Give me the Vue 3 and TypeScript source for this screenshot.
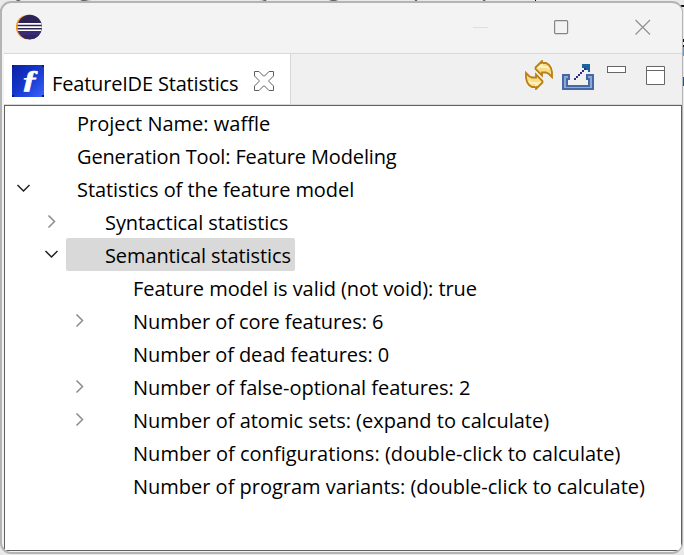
<script setup lang="ts">
interface Row {
  text: string
  level: number
  state?: 'open' | 'closed'
  selected?: boolean
  spacing: number
}

const rows: Row[] = [
  { text: 'Project Name: waffle', level: 0, spacing: 0 },
  { text: 'Generation Tool: Feature Modeling', level: 0, spacing: -0.14 },
  { text: 'Statistics of the feature model', level: 0, state: 'open', spacing: -0.07 },
  { text: 'Syntactical statistics', level: 1, state: 'closed', spacing: -0.08 },
  { text: 'Semantical statistics', level: 1, state: 'open', selected: true, spacing: -0.1 },
  { text: 'Feature model is valid (not void): true', level: 2, spacing: -0.06 },
  { text: 'Number of core features: 6', level: 2, state: 'closed', spacing: -0.07 },
  { text: 'Number of dead features: 0', level: 2, spacing: -0.07 },
  { text: 'Number of false-optional features: 2', level: 2, state: 'closed', spacing: -0.02 },
  { text: 'Number of atomic sets: (expand to calculate)', level: 2, state: 'closed', spacing: 0 },
  { text: 'Number of configurations: (double-click to calculate)', level: 2, spacing: 0.03 },
  { text: 'Number of program variants: (double-click to calculate)', level: 2, spacing: -0.01 },
]
</script>

<template>
  <div class="desktop">
    <svg class="behind" width="684" height="555" viewBox="0 0 684 555">
      <path d="M0 9h3v33H0z" fill="#a7a5cf" />
      <path d="M16 0l6 4M80 0q6 3 12 3M260 3q5 0 6-3M329 0l9 3M415 3l2-3M483 0l3 4" transform="translate(0 -1)" fill="none" stroke="#666" stroke-width="2" />
      <path d="M535 0h1v3h-1zM678 5h6v2h-6zM683 39h1v3h-1zM683 45h1v2h-1z" fill="#111" />
      <path d="M683 47h1v9h-1z" fill="#5b9bd5" />
      <path d="M683 77h1v9h-1z" fill="#294f91" />
    </svg>
    <div class="window">
      <header class="titlebar">
        <svg class="eclipse" width="28" height="28" viewBox="0 0 28 28">
          <defs>
            <clipPath id="disc"><circle cx="14.6" cy="14" r="12.2" /></clipPath>
          </defs>
          <circle cx="13.2" cy="14" r="12.3" fill="#f7941e" />
          <circle cx="14.8" cy="14" r="12.2" fill="#2c2255" />
          <g clip-path="url(#disc)">
            <path d="M2 17h26v10H2z" fill="#3a2b75" />
            <path d="M2 22h26v6H2z" fill="#2c2255" opacity=".55" />
            <path d="M2 10h26v1.8H2zM2 13.2h26v1.8H2zM2 16.4h26v1.6H2z" fill="#fff" />
          </g>
        </svg>
        <svg class="controls" width="180" height="20" viewBox="0 0 180 20" fill="none">
          <path d="M0 10.5h15" stroke="#dedede" />
          <rect x="81.6" y="3.6" width="13" height="13" rx="1" stroke="#858585" stroke-width="1.2" />
          <path d="M162.5 3l14.500 14.500M177 3l-14.500 14.500" stroke="#909090" stroke-width="1.2" />
        </svg>
      </header>
      <div class="tabs">
        <div class="tab">
          <svg class="logo" width="32" height="32" viewBox="0 0 32 32">
            <defs>
              <linearGradient id="blue" x1="0" y1="0" x2="1" y2="1">
                <stop offset="0" stop-color="#0a20a5" />
                <stop offset=".5" stop-color="#1638cc" />
                <stop offset="1" stop-color="#3a63ff" />
              </linearGradient>
            </defs>
            <rect width="32" height="32" fill="url(#blue)" />
            <path d="M0 0h2v2H0zM30 0h2v2h-2zM0 30h2v2H0zM30 30h2v2h-2z" fill="#071a66" />
            <text x="0" y="0" class="glyph" transform="translate(9.500 22.500) scale(1.3 1)">ƒ</text>
          </svg>
          <span class="caption">FeatureIDE Statistics</span>
          <svg class="close" width="20" height="20" viewBox="0 0 20 20">
            <path d="M.5.5h4.500l4.500 4.500h1L15 .5h4.500V5L15 9.500v1l4.500 4.500v4.500H15L10.500 15h-1L5 19.500H.5V15L5 10.500v-1L.5 5z" fill="#fff" stroke="#5f5f5f" />
          </svg>
        </div>
        <div class="tools">
          <svg class="sync" width="28" height="30" viewBox="0 0 28 30">
            <g id="arrow" stroke-width="1.8">
              <path d="M10.500 7.500L17 1v2h4l3 2 2 3 1 4v5l-3-3-3-1.500h-4v3L10.500 9z" fill="#f8dc86" stroke="#b98016" />
              <path d="M13 8l4-3v2h5l2 2" fill="none" stroke="#fff2c2" />
            </g>
            <use href="#arrow" transform="rotate(180 14 15)" />
          </svg>
          <svg class="export" width="32" height="27" viewBox="0 0 32 27" shape-rendering="crispEdges">
            <path d="M0 10h8v6H6v5h20v-5h-2v-6h8v16H0z" fill="#4668a7" />
            <path d="M2 12h4v2H4v9h24v-9h-2v-2h4v12H2z" fill="#8da9d6" />
            <path d="M20 0h8v8h-2V6h-2V4h-4z" fill="#17649b" />
            <path d="M12 14h2v2h-2zM14 12h2v2h-2zM16 10h2v2h-2zM18 8h2v2h-2zM20 6h2v2h-2zM22 4h2v2h-2z" fill="#2d2b86" />
          </svg>
          <svg class="panes" width="60" height="20" viewBox="0 0 60 20" fill="#fff" stroke="#666">
            <rect x=".5" y=".5" width="18" height="6" />
            <path d="M39.500.5h18v18h-18zM39.500 4.500h18" />
          </svg>
        </div>
      </div>
      <main class="tree">
        <div v-for="row in rows" :key="row.text" class="row" :class="'level-' + row.level">
          <span class="toggle">
            <svg v-if="row.state === 'open'" width="14" height="14" viewBox="0 0 14 14">
              <path d="M1.500 3l6 6 6-6" fill="none" stroke="#222" stroke-width="1.5" />
            </svg>
            <svg v-else-if="row.state === 'closed'" width="14" height="14" viewBox="0 0 14 14">
              <path d="M4.500 0.500l6 6-6 6" fill="none" stroke="#8c8c8c" stroke-width="1.5" />
            </svg>
          </span>
          <span class="label" :class="{ selected: row.selected }" :style="{ letterSpacing: row.spacing + 'px' }">{{ row.text }}</span>
        </div>
      </main>
    </div>
  </div>
</template>

<style>
body {
  margin: 0;
  overflow: hidden;
}
</style>

<style scoped>
.desktop {
  position: relative;
  box-sizing: border-box;
  width: 684px;
  height: 555px;
  padding: 1px 1px 1px 0;
  background: #e9e9e9;
  font-family: "Open Sans", "Noto Sans", sans-serif;
  font-size: 20px;
  color: #000;
}
.behind {
  position: absolute;
  left: 0;
  top: 0;
}
.window {
  position: relative;
  box-sizing: border-box;
  height: 553px;
  display: flex;
  flex-direction: column;
  overflow: hidden;
  padding-left: 2px;
  border: 2px solid #b4b4b4;
  border-right-width: 1px;
  border-radius: 11px;
  background: #f3f3f3;
}
.titlebar {
  box-sizing: border-box;
  height: 51px;
  flex: none;
  display: flex;
  justify-content: space-between;
  border-bottom: 1px solid #d9d9d9;
}
.eclipse {
  margin: 10px 0 0 11px;
}
.controls {
  margin: 14px 29px 0 0;
}
.tabs {
  box-sizing: border-box;
  height: 51px;
  flex: none;
  display: flex;
  justify-content: space-between;
  border-bottom: 1px solid #dadada;
  background: #f0f0f0;
}
.tab {
  box-sizing: border-box;
  width: 287px;
  height: 50px;
  display: flex;
  align-items: flex-start;
  border-right: 1px solid #d8d8d8;
  background: #fff;
}
.logo {
  margin: 11px 0 0 8px;
}
.glyph {
  font: italic bold 26px "Liberation Serif", serif;
  fill: #fff;
  stroke: #fff;
  stroke-width: 0.7px;
}
.caption {
  width: 190px;
  margin: 15px 0 0 8px;
  line-height: 29px;
  letter-spacing: -0.18px;
  white-space: nowrap;
}
.close {
  margin: 17px 0 0 12px;
}
.tools {
  display: flex;
  align-items: flex-start;
}
.sync {
  margin: 6px 9px 0 0;
}
.export {
  margin: 10px 13px 0 0;
}
.panes {
  margin: 12px 15px 0 0;
}
.tree {
  box-sizing: border-box;
  width: 678px;
  height: 446px;
  flex: none;
  border: 1px solid #606060;
  background: #fff;
}
.row {
  height: 33px;
  display: flex;
  align-items: center;
  padding-left: 12px;
}
.level-1 {
  padding-left: 40px;
}
.level-2 {
  padding-left: 68px;
}
.toggle {
  width: 14px;
  height: 14px;
  flex: none;
  display: flex;
  margin: 0 1px 0 -1px;
}
.label {
  box-sizing: border-box;
  height: 33px;
  margin-left: 7px;
  padding: 2px 4px 0 39px;
  margin-right: auto;
  border-radius: 2px;
  line-height: 32px;
  white-space: nowrap;
}
.selected {
  background: #d9d9d9;
}
</style>
